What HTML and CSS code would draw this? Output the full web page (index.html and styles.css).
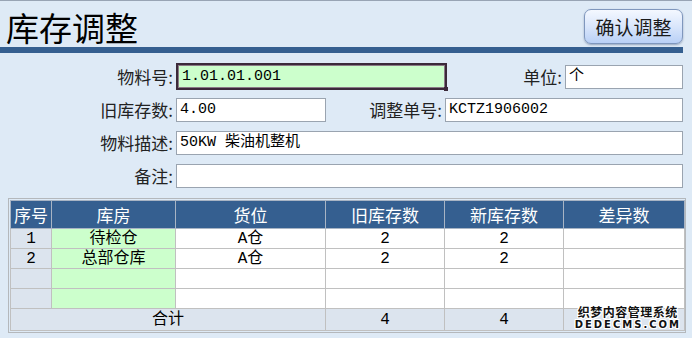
FILE: index.html
```html
<!DOCTYPE html>
<html>
    <head>
        <meta charset="utf-8">
        <title>库存调整</title>
        <link rel="stylesheet" href="styles.css">
    </head>
    <body>
        <div class="page">
            <div class="head">
                <h1 class="title">库存调整</h1>
                <button class="btn" type="button">确认调整</button>
            </div>
            <div class="bar"></div>

            <div class="form">
                <div class="row">
                    <label class="lbl">物料号:</label>
                    <div class="field focus w-code">1.01.01.001<span class="grip"></span></div>
                    <label class="lbl lbl-side">单位:</label>
                    <div class="field w-unit">个</div>
                </div>
                <div class="row">
                    <label class="lbl">旧库存数:</label>
                    <div class="field w-old">4.00</div>
                    <label class="lbl lbl-side">调整单号:</label>
                    <div class="field w-no">KCTZ1906002</div>
                </div>
                <div class="row">
                    <label class="lbl">物料描述:</label>
                    <div class="field w-full">50KW 柴油机整机</div>
                </div>
                <div class="row">
                    <label class="lbl">备注:</label>
                    <div class="field w-full"></div>
                </div>
            </div>

            <div class="grid-wrap">
                <table class="grid">
                    <colgroup>
                        <col style="width: 41px">
                        <col style="width: 124px">
                        <col style="width: 150px">
                        <col style="width: 119px">
                        <col style="width: 119px">
                        <col style="width: 121px">
                    </colgroup>
                    <tr class="grid-head">
                        <th>序号</th>
                        <th>库房</th>
                        <th>货位</th>
                        <th>旧库存数</th>
                        <th>新库存数</th>
                        <th>差异数</th>
                    </tr>
                    <tr>
                        <td class="num">1</td>
                        <td class="store">待检仓</td>
                        <td>A仓</td>
                        <td>2</td>
                        <td>2</td>
                        <td></td>
                    </tr>
                    <tr>
                        <td class="num">2</td>
                        <td class="store">总部仓库</td>
                        <td>A仓</td>
                        <td>2</td>
                        <td>2</td>
                        <td></td>
                    </tr>
                    <tr>
                        <td class="num"></td>
                        <td class="store"></td>
                        <td></td>
                        <td></td>
                        <td></td>
                        <td></td>
                    </tr>
                    <tr>
                        <td class="num"></td>
                        <td class="store"></td>
                        <td></td>
                        <td></td>
                        <td></td>
                        <td></td>
                    </tr>
                    <tr class="grid-foot">
                        <td colspan="3">合计</td>
                        <td>4</td>
                        <td>4</td>
                        <td></td>
                    </tr>
                </table>
            </div>

            <div class="mark">
                <div class="mark-cn">织梦内容管理系统</div>
                <div class="mark-en">DEDECMS.COM</div>
            </div>
        </div>
    </body>
</html>
```

FILE: styles.css
```css
html, body{
    margin: 0;
    padding: 0;
}

body{
    background-color: #deeaf6;
    border-top: 1px solid #98a4b4;
    font-family: "Noto Sans CJK SC", sans-serif;
    color: #111111;
    width: 692px;
    height: 337px;
    overflow: hidden;
}

.page{
    position: relative;
    height: 337px;
}

/* title + button */
.head{
    display: flex;
    justify-content: space-between;
    align-items: flex-start;
    width: 683px;
    height: 46px;
}

.title{
    margin: 9px 0 0 6px;
    font-size: 33px;
    line-height: 34px;
    font-weight: normal;
    color: #000000;
}

.btn{
    margin-top: 8px;
    width: 99px;
    height: 35px;
    padding: 0;
    border: 1px solid #7f97bd;
    border-radius: 7px;
    background: linear-gradient(#f4f8ff, #d9e6fb 50%, #b9d0f6);
    box-shadow: 0 1px 2px rgba(60, 80, 120, 0.45);
    font-family: "Noto Sans CJK SC", sans-serif;
    font-size: 19px;
    color: #1a1a1a;
}

.bar{
    width: 683px;
    height: 6px;
    background-color: #355f90;
}

/* form rows */
.form{
    width: 683px;
    padding-top: 7px;
}

.row{
    display: flex;
    align-items: center;
    height: 33px;
}

.lbl{
    width: 173px;
    text-align: right;
    font-size: 17px;
    color: #222222;
    white-space: nowrap;
}

.lbl-side{
    flex: 1;
    width: auto;
    margin-right: 3px;
}

.field{
    position: relative;
    box-sizing: border-box;
    height: 24px;
    margin-left: 3px;
    padding: 0 3px;
    border: 1px solid #9aa4b0;
    background-color: #ffffff;
    font-family: "Liberation Mono", "Noto Sans CJK SC", monospace;
    font-size: 15px;
    line-height: 22px;
    color: #000000;
    white-space: nowrap;
}

.lbl-side + .field{
    margin-left: 0;
}

.focus{
    height: 27px;
    border: 2px solid #3b2a3a;
    box-shadow: inset 0 0 0 1px #8a7a86;
    background-color: #ccffcc;
    line-height: 23px;
    padding-left: 4px;
}

.grip{
    position: absolute;
    right: -3px;
    bottom: -3px;
    width: 4px;
    height: 4px;
    background-color: #3b2a3a;
}

.w-code{ width: 271px; }
.w-unit{ width: 118px; }
.w-old{ width: 150px; }
.w-no{ width: 238px; }
.w-full{ width: 507px; }

/* detail grid */
.grid-wrap{
    margin: 6px 0 0 8px;
    width: 674px;
    padding: 1px;
    border: 1px solid #b4b8bc;
}

.grid{
    width: 674px;
    border-collapse: collapse;
    table-layout: fixed;
}

.grid th, .grid td{
    border: 1px solid #c0c0c0;
    padding: 0;
    text-align: center;
    white-space: nowrap;
    overflow: hidden;
}

.grid-head th{
    height: 27px;
    background-color: #355f90;
    border-color: #a8b4c4;
    color: #ffffff;
    font-size: 17px;
    font-weight: normal;
}

.grid td{
    height: 19px;
    background-color: #ffffff;
    font-family: "Liberation Mono", "Noto Sans CJK SC", monospace;
    font-size: 16px;
    line-height: 18px;
    color: #000000;
}

.grid td.num{
    background-color: #dce4ee;
}

.grid td.store{
    background-color: #ccffcc;
}

.grid-foot td{
    height: 21px;
    background-color: #dce4ee;
}

/* watermark in the corner */
.mark{
    position: absolute;
    right: 11px;
    bottom: 7px;
    text-align: center;
    color: #111111;
    font-weight: bold;
    text-shadow: 1px 0 0 #ffffff, -1px 0 0 #ffffff, 0 1px 0 #ffffff, 0 -1px 0 #ffffff,
        1px 1px 0 #ffffff, -1px -1px 0 #ffffff, 1px -1px 0 #ffffff, -1px 1px 0 #ffffff;
}

.mark-cn{
    font-size: 12px;
    line-height: 14px;
    letter-spacing: 0.5px;
}

.mark-en{
    font-family: "DejaVu Sans", sans-serif;
    font-size: 10px;
    line-height: 12px;
    letter-spacing: 2px;
}
```
